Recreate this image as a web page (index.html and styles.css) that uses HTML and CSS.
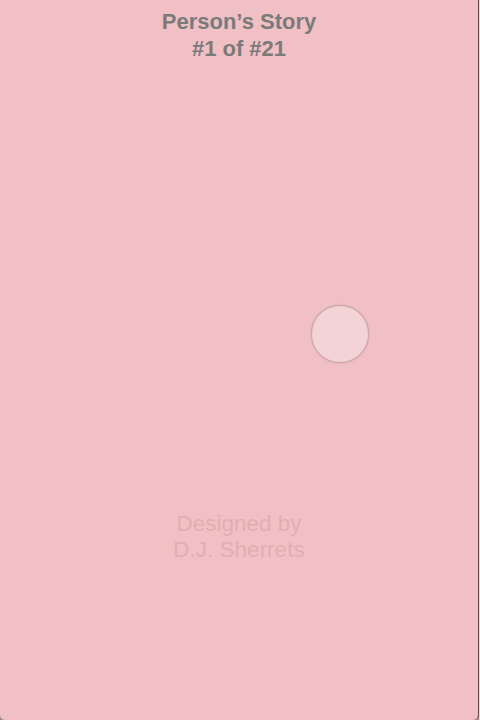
FILE: index.html
```html
<!DOCTYPE html>
<html>
<head>
<meta charset="utf-8">
<link rel="stylesheet" href="styles.css">
</head>
<body>
<div class="screen">
  <header class="title">
    <div>Person’s Story</div>
    <div>#1 of #21</div>
  </header>
  <div class="spacer"></div>
  <footer class="credit">
    <div>Designed by</div>
    <div>D.J. Sherrets</div>
  </footer>
  <div class="bubble"></div>
</div>
</body>
</html>
```
FILE: styles.css
```css
html, body {
  margin: 0;
  padding: 0;
}
body {
  background: linear-gradient(to right, #9a8a8c 0, #9a8a8c 479px, #f3d0d3 479px);
}
.screen {
  position: relative;
  width: 478px;
  height: 720px;
  background: #f1c0c4;
  border-right: 1px solid #5c4a4d;
  border-radius: 0 0 5px 5px;
  display: flex;
  flex-direction: column;
  align-items: center;
  font-family: "Liberation Sans", Arial, sans-serif;
}
.title {
  margin-top: 8px;
  font-weight: bold;
  font-size: 22px;
  line-height: 27px;
  color: #7b7a7b;
  text-align: center;
}
.spacer {
  flex: 1;
}
.credit {
  margin-bottom: 157px;
  font-size: 22.5px;
  line-height: 26px;
  color: #e2aeb3;
  text-align: center;
}
.bubble {
  position: absolute;
  left: 311px;
  top: 305px;
  width: 56px;
  height: 56px;
  border-radius: 50%;
  background: #f4d3d6;
  border: 1px solid #c8a9ac;
  box-shadow: 0 0 2px rgba(120, 90, 95, 0.35);
}
```
